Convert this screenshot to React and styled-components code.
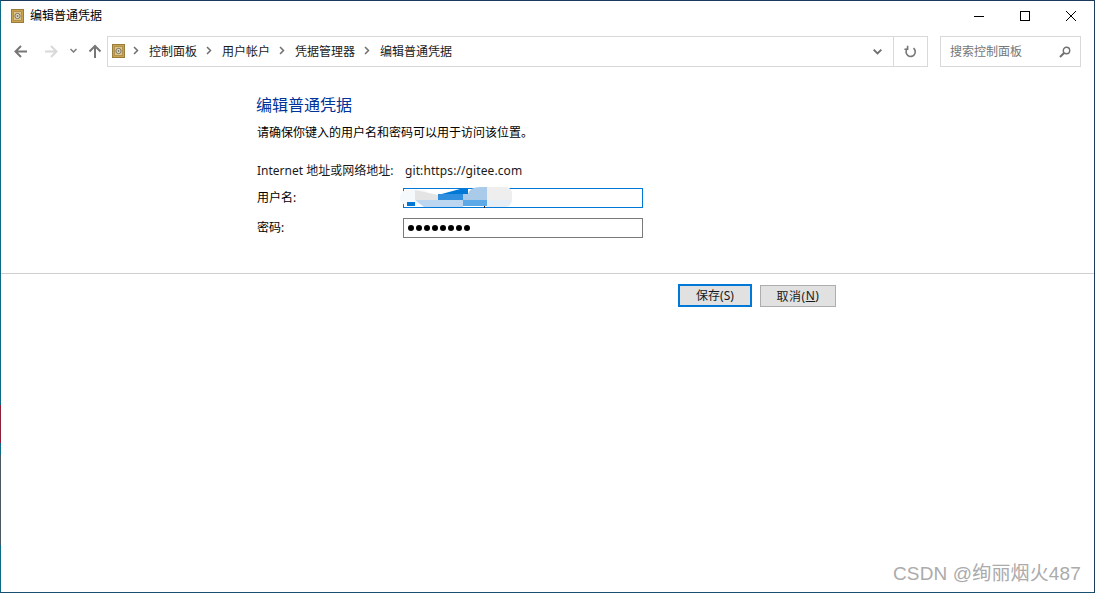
import React from 'react';
import styled, { createGlobalStyle } from 'styled-components';

const SANS = '"Noto Sans", "Noto Sans CJK SC", sans-serif';

const GlobalStyle = createGlobalStyle`
    html, body {
        margin: 0;
        padding: 0;
        background: #fff;
        overflow: hidden;
    }
    * {
        box-sizing: border-box;
    }
`;

const SafeIcon = () => (
    <svg width="14" height="14" viewBox="0 0 14 14">
        <rect x="1.5" y="0.5" width="12" height="13" fill="#c9a24f" stroke="#9a7c3a" />
        <rect x="3.5" y="2.5" width="8" height="9" fill="#dcc489" stroke="#b0924c" />
        <circle cx="7.5" cy="7" r="2.6" fill="#e4dfcf" stroke="#77705c" />
        <circle cx="7.5" cy="7" r="0.9" fill="#77705c" />
    </svg>
);

const Arrow = ({ color, dir }) => (
    <svg width="16" height="16" viewBox="0 0 16 16" fill="none" stroke={color} strokeWidth="2">
        {dir === 'left' && <path d="M14 8.5H3M8 3L2.5 8.5L8 14" />}
        {dir === 'right' && <path d="M2 8.5H13M8 3L13.5 8.5L8 14" />}
        {dir === 'up' && <path d="M8 15V3M2.5 8.5L8 3L13.5 8.5" />}
    </svg>
);

const Chevron = ({ size = 7, color = '#7a7a7a' }) => (
    <svg width={size} height={size} viewBox="0 0 7 7" fill="none" stroke={color} strokeWidth="1.5">
        <path d="M0.5 2L3.5 5L6.5 2" />
    </svg>
);

const Crumb = () => (
    <svg width="6" height="9" viewBox="0 0 6 9" fill="none" stroke="#6f6f6f" strokeWidth="1.5">
        <path d="M1 1L4.5 4.5L1 8" />
    </svg>
);

// the redacted user name in the reference, a patch of blurred blocks
const Smudge = () => (
    <svg width="112" height="24" viewBox="0 0 112 24">
        <rect x="0" y="4" width="30" height="15" rx="7" fill="#f6f9fc" />
        <path d="M15 4L38 9V14H15Z" fill="#e4e4e4" />
        <path d="M38 9L60 3H68V9Z" fill="#0078d7" />
        <rect x="38" y="8" width="25" height="6" fill="#2f8ede" />
        <rect x="7" y="16" width="8" height="4" fill="#0078d7" />
        <path d="M15 14H63V21H24Z" fill="#bcd6ef" />
        <rect x="63" y="14" width="24" height="6" fill="#5da8e6" />
        <path d="M63 14V8L68 8Q70 1 80 1H87V14Z" fill="#a9cbe9" />
        <path d="M87 1H105Q112 1 112 8V14H87Z" fill="#eeeeee" />
        <path d="M87 14H112Q111 21 105 21H87Z" fill="#e6edf5" />
        <rect x="84" y="20" width="1" height="2" fill="#222" />
    </svg>
);

const App = () => {
    return <Window>
        <GlobalStyle />
        <LeftEdge />
        <TitleBar>
            <TitleLeft>
                <SafeIcon />
                <Title>编辑普通凭据</Title>
            </TitleLeft>
            <Controls>
                <ControlButton>
                    <svg width="10" height="10" viewBox="0 0 10 10"><path d="M0 5.5H10" stroke="#000" /></svg>
                </ControlButton>
                <ControlButton>
                    <svg width="10" height="10" viewBox="0 0 10 10" fill="none"><rect x="0.5" y="0.5" width="9" height="9" stroke="#000" /></svg>
                </ControlButton>
                <ControlButton>
                    <svg width="10" height="10" viewBox="0 0 10 10"><path d="M0 0L10 10M10 0L0 10" stroke="#000" /></svg>
                </ControlButton>
            </Controls>
        </TitleBar>
        <NavBar>
            <NavButtons>
                <NavIcon><Arrow color="#767676" dir="left" /></NavIcon>
                <NavIcon $gap={14}><Arrow color="#d8d8d8" dir="right" /></NavIcon>
                <NavIcon $gap={11}><Chevron /></NavIcon>
                <NavIcon $gap={10}><Arrow color="#767676" dir="up" /></NavIcon>
            </NavButtons>
            <AddressBar>
                <Path>
                    <PathIcon><SafeIcon /></PathIcon>
                    <Crumb />
                    <span>控制面板</span>
                    <Crumb />
                    <span>用户帐户</span>
                    <Crumb />
                    <span>凭据管理器</span>
                    <Crumb />
                    <span>编辑普通凭据</span>
                </Path>
                <AddressDrop><Chevron size={9} color="#6f6f6f" /></AddressDrop>
                <Refresh>
                    <svg width="13" height="14" viewBox="0 0 13 14" fill="none" stroke="#767676" strokeWidth="1.6">
                        <path d="M3.2 3.8A4.6 4.6 0 1 0 9.5 3.2" />
                        <path d="M3.6 0.8V4.2H0.4" />
                    </svg>
                </Refresh>
            </AddressBar>
            <SearchBox>
                <SearchText>搜索控制面板</SearchText>
                <svg width="12" height="12" viewBox="0 0 12 12" fill="none" stroke="#6f6f6f">
                    <circle cx="7.5" cy="4.5" r="3.2" strokeWidth="1.4" />
                    <path d="M5 7L1 11" strokeWidth="2" />
                </svg>
            </SearchBox>
        </NavBar>
        <Content>
            <Heading>编辑普通凭据</Heading>
            <Description>请确保你键入的用户名和密码可以用于访问该位置。</Description>
            <AddressRow>
                <Label>Internet 地址或网络地址:</Label>
                <Value>git:https://gitee.com</Value>
            </AddressRow>
            <FieldRow>
                <Label>用户名:</Label>
                <Input $focused>
                    <SmudgeWrap><Smudge /></SmudgeWrap>
                </Input>
            </FieldRow>
            <FieldRow>
                <Label>密码:</Label>
                <Input>
                    <Dots>{Array.from({ length: 8 }).map((_, i) => <Dot key={i} />)}</Dots>
                </Input>
            </FieldRow>
        </Content>
        <Divider />
        <Actions>
            <Button $primary>保存(S)</Button>
            <Button>取消(<u>N</u>)</Button>
        </Actions>
        <Watermark>CSDN @绚丽烟火487</Watermark>
    </Window>
};

export default App;

const Window = styled.div`
    position: relative;
    width: 1095px;
    height: 593px;
    background: #fff;
    color: #000;
    font-family: ${SANS};
    font-size: 12px;
    border-style: solid;
    border-width: 1px;
    border-color: #1b3a5c #1b3a5c #17506e #0f6a85;
`;

// desktop wallpaper showing through along the left edge of the window
const LeftEdge = styled.div`
    position: absolute;
    left: -1px;
    top: 0;
    bottom: 0;
    width: 1px;
    background: linear-gradient(
        to bottom,
        #0f6a85 0,
        #0f6a85 404px,
        #8c2036 404px,
        #8c2036 442px,
        #0f6a85 442px,
        #0f6a85 454px,
        #4a5664 454px,
        #4a5664 544px,
        #0f6a85 544px
    );
`;

const TitleBar = styled.div`
    display: flex;
    align-items: center;
    justify-content: space-between;
    height: 29px;
    padding-left: 9px;
`;

const TitleLeft = styled.div`
    display: flex;
    align-items: center;
    gap: 6px;
`;

const Title = styled.span`
    font-size: 12px;
    line-height: 16px;
`;

const Controls = styled.div`
    display: flex;
`;

const ControlButton = styled.div`
    display: flex;
    align-items: center;
    justify-content: center;
    width: 46px;
    height: 29px;
`;

const NavBar = styled.div`
    display: flex;
    align-items: center;
    height: 31px;
    margin-top: 6px;
    padding: 0 13px 0 12px;
`;

const NavButtons = styled.div`
    display: flex;
    align-items: center;
    width: 94px;
    padding-bottom: 2px;
`;

const NavIcon = styled.div`
    display: flex;
    align-items: center;
    margin-left: ${p => p.$gap || 0}px;
    flex: none;
`;

const AddressBar = styled.div`
    display: flex;
    align-items: stretch;
    width: 822px;
    height: 31px;
    border: 1px solid #d9d9d9;
`;

const Path = styled.div`
    flex: 1;
    display: flex;
    align-items: center;
    gap: 9.5px;
    padding: 0 0 2px 3px;
    color: #1a1a1a;
`;

const PathIcon = styled.span`
    display: flex;
    margin-right: -1px;
`;

const AddressDrop = styled.div`
    display: flex;
    align-items: center;
    justify-content: flex-start;
    width: 30px;
    padding-left: 9px;
    border-right: 1px solid #d9d9d9;
`;

const Refresh = styled.div`
    display: flex;
    align-items: center;
    justify-content: center;
    width: 33px;
`;

const SearchBox = styled.div`
    display: flex;
    align-items: center;
    justify-content: space-between;
    width: 141px;
    height: 31px;
    margin-left: 12px;
    padding: 0 9px;
    border: 1px solid #d9d9d9;
    color: #767676;
`;

const SearchText = styled.span`
    margin-bottom: 1px;
`;

const Content = styled.div`
    padding: 28px 0 0 256px;
`;

const Heading = styled.h1`
    margin: 0 0 0 -1px;
    font-size: 16px;
    font-weight: 400;
    line-height: 20px;
    color: #003399;
`;

const Description = styled.p`
    margin: 9px 0 0;
    font-size: 12px;
    line-height: 18px;
`;

const AddressRow = styled.div`
    display: flex;
    align-items: center;
    height: 18px;
    margin-top: 19px;
    color: #1a1a1a;
`;

const Label = styled.span`
    width: 148px;
    flex: none;
    white-space: nowrap;
`;

const Value = styled.span`
    white-space: nowrap;
    letter-spacing: 0.1px;
`;

const FieldRow = styled.div`
    display: flex;
    align-items: center;
    height: 20px;
    margin-top: 10px;

    ${AddressRow} + & {
        margin-top: 9px;
    }

    ${Label} {
        padding-bottom: 3px;
    }
`;

const Input = styled.div`
    position: relative;
    display: flex;
    align-items: center;
    width: 240px;
    height: 20px;
    margin-left: -2px;
    padding-left: 4px;
    border: 1px solid ${p => (p.$focused ? '#0078d7' : '#7a7a7a')};
`;

const SmudgeWrap = styled.div`
    position: absolute;
    left: -4px;
    top: -3px;
    line-height: 0;
`;

const Dots = styled.div`
    display: flex;
    gap: 2px;
`;

const Dot = styled.span`
    width: 6px;
    height: 6px;
    border-radius: 50%;
    background: #000;
`;

const Divider = styled.div`
    height: 1px;
    margin-top: 35px;
    background: #cfcfcf;
`;

const Actions = styled.div`
    display: flex;
    align-items: flex-end;
    gap: 8px;
    height: 33px;
    padding-left: 677px;
`;

const Button = styled.div`
    display: flex;
    align-items: center;
    justify-content: center;
    width: ${p => (p.$primary ? 74 : 76)}px;
    height: ${p => (p.$primary ? 23 : 22)}px;
    padding-bottom: 1px;
    background: #e1e1e1;
    color: #1a1a1a;
    letter-spacing: ${p => (p.$primary ? 0 : 0.5)}px;
    border: ${p => (p.$primary ? '2px solid #0078d7' : '1px solid #adadad')};
`;

const Watermark = styled.div`
    position: absolute;
    right: 13px;
    bottom: 6px;
    font-family: "Liberation Sans", "Noto Sans CJK SC", sans-serif;
    font-size: 19px;
    letter-spacing: 0.15px;
    line-height: 24px;
    color: #ababab;
`;
